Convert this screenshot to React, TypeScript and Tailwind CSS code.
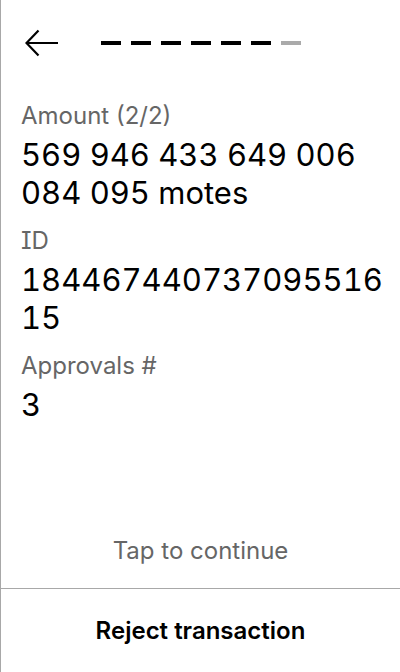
import { Fragment } from "react";

const fields = [
  { label: "Amount (2/2)", value: "569 946 433 649 006 084 095 motes" },
  { label: "ID", value: "18446744073709551615" },
  { label: "Approvals #", value: "3" },
];

const steps = [true, true, true, true, true, true, false];

export default function App() {
  return (
    <div
      className="flex h-[672px] w-[400px] flex-col border-l border-[#a8a8a8] bg-white text-black"
      style={{ fontFamily: "Inter, 'Noto Sans', sans-serif" }}
    >
      <div className="flex h-[86px] items-center pl-6">
        <svg width="34" height="28" viewBox="0 0 34 28" fill="none">
          <path d="M33 14H2M13.5 1.5L1.5 14L13.5 26.5" stroke="black" strokeWidth="2.2" />
        </svg>
        <div className="ml-[42px] flex gap-[10px]">
          {steps.map((done, i) => (
            <div
              key={i}
              className={done ? "h-1 w-5 bg-black" : "h-1 w-5 bg-[#aaaaaa]"}
            />
          ))}
        </div>
      </div>

      <div className="flex flex-col pl-5 pr-3 pt-[15px]">
        {fields.map((f) => (
          <Fragment key={f.label}>
            <p className="text-[24px] leading-[30px] text-[#666666] [font-feature-settings:'cv08']">
              {f.label}
            </p>
            <p className="mt-[5px] mb-[14px] break-words text-[31px] leading-[38px] tabular-nums text-black">
              {f.value}
            </p>
          </Fragment>
        ))}
      </div>

      <div className="mt-auto pb-[22px] text-center text-[24px] leading-[30px] text-[#666666]">
        Tap to continue
      </div>
      <div className="flex h-[84px] items-center justify-center border-t border-[#a8a8a8] text-[24px] font-semibold">
        Reject transaction
      </div>
    </div>
  );
}
